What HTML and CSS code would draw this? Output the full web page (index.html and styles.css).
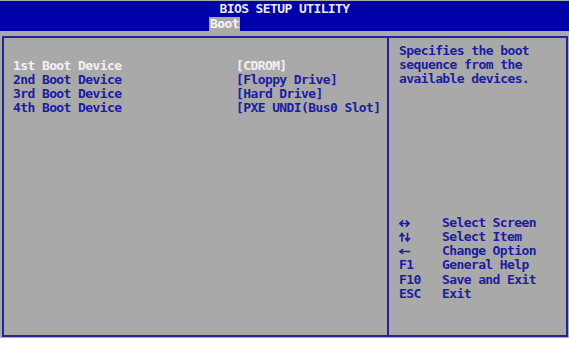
FILE: index.html
```html
<!DOCTYPE html>
<html>
<head>
<meta charset="utf-8">
<link rel="stylesheet" href="styles.css">
</head>
<body>
<div class="screen">
  <header class="top">
    <div class="title">BIOS SETUP UTILITY</div>
    <nav class="tabs"><span class="tab active">Boot</span></nav>
  </header>
  <main class="frame">
    <section class="options">
      <div class="row selected"><span class="label">1st Boot Device</span><span class="value">[CDROM]</span></div>
      <div class="row"><span class="label">2nd Boot Device</span><span class="value">[Floppy Drive]</span></div>
      <div class="row"><span class="label">3rd Boot Device</span><span class="value">[Hard Drive]</span></div>
      <div class="row"><span class="label">4th Boot Device</span><span class="value">[PXE UNDI(Bus0 Slot]</span></div>
    </section>
    <aside class="side">
      <p class="help">Specifies the boot<br>sequence from the<br>available devices.</p>
      <dl class="keys">
        <dt><svg class="icon" width="12" height="14" viewBox="0 0 12 14"><path d="M1 7.5H10M1 7.5L3.5 5M1 7.5L3.5 10M10 7.5L7.5 5M10 7.5L7.5 10" /></svg></dt><dd>Select Screen</dd>
        <dt><svg class="icon" width="12" height="14" viewBox="0 0 12 14"><path d="M3 3.5V11M3 3.5L1 6M3 3.5L5 6M8.5 3.5V11M8.5 11L6.5 8.5M8.5 11L10.5 8.5" /></svg></dt><dd>Select Item</dd>
        <dt><svg class="icon" width="12" height="14" viewBox="0 0 12 14"><path d="M1 7.5H10.5M1 7.5L3.5 5.5M1 7.5L3.5 9.5" /></svg></dt><dd>Change Option</dd>
        <dt>F1</dt><dd>General Help</dd>
        <dt>F10</dt><dd>Save and Exit</dd>
        <dt>ESC</dt><dd>Exit</dd>
      </dl>
    </aside>
  </main>
</div>
</body>
</html>
```
FILE: styles.css
```css
html, body {
  margin: 0;
  padding: 0;
  background: #a9a9a9;
}
body {
  width: 569px;
  height: 338px;
  overflow: hidden;
  font-family: "DejaVu Sans Mono", "Liberation Mono", monospace;
  font-weight: bold;
  font-size: 13px;
  letter-spacing: -0.6px;
  line-height: 14px;
  color: #1c1ca2;
}
.screen {
  display: flex;
  flex-direction: column;
  height: 338px;
}
.top {
  margin-top: 1px;
  height: 30px;
  background: #0000a8;
  display: flex;
  flex-direction: column;
  box-sizing: border-box;
  padding-top: 1px;
}
.title {
  text-align: center;
  color: #e8e8f4;
  height: 15px;
}
.tabs {
  display: flex;
  padding-left: 209px;
  flex: 1;
  align-items: stretch;
}
.tab {
  padding: 0 1px;
  color: #f4f4f4;
  display: flex;
  align-items: center;
}
.tab.active {
  background: #a9a9a9;
}
.frame {
  margin: 5px 1px 1px 2px;
  flex: 1;
  border: 2px solid #23239a;
  display: flex;
  box-sizing: border-box;
}
.options {
  width: 383px;
  padding: 21px 0 0 9px;
  box-sizing: border-box;
}
.row {
  display: grid;
  grid-template-columns: 223px auto;
  height: 14px;
}
.row.selected {
  color: #f2f2f2;
}
.side {
  flex: 1;
  border-left: 2px solid #23239a;
  padding: 6px 0 34px 10px;
  display: flex;
  flex-direction: column;
}
.help {
  margin: 0;
}
.keys {
  margin: auto 0 0 0;
  display: grid;
  grid-template-columns: 43px auto;
}
.keys dt, .keys dd {
  margin: 0;
  height: 14.2px;
  line-height: 14px;
}
.icon {
  display: block;
  fill: none;
  stroke: #1c1ca2;
  stroke-width: 1.6;
  stroke-linecap: square;
}
```
